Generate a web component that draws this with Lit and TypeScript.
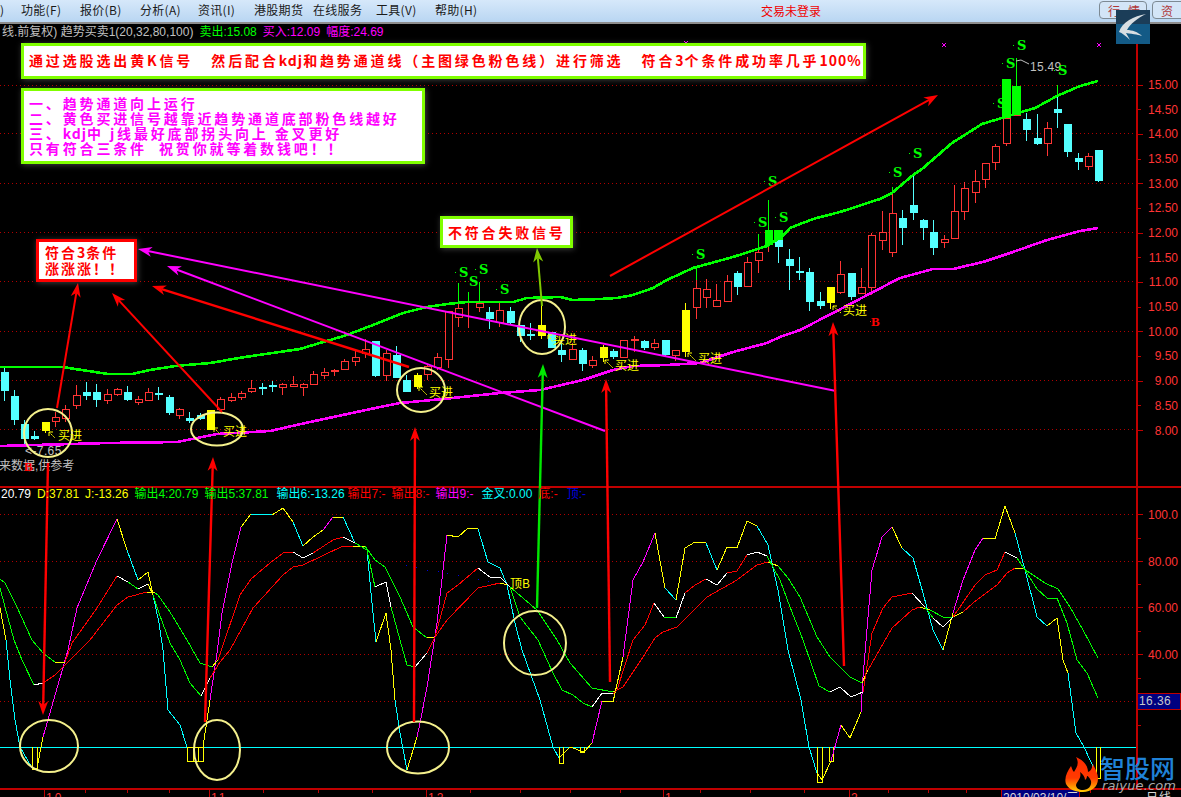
import { LitElement, html, css, svg } from "lit";
import { customElement } from "lit/decorators.js";

const COL: Record<string, string> = { c: "#00ffff", y: "#ffff00", m: "#ff00ff", g: "#00ff00", r: "#ff0000", w: "#ffffff" };

// price candles: type, high, body top, body bottom, low
const CANDLES: [string, number, number, number, number][] = [
  ["c",367,372,391,401],["c",390,396,420,425],["c",420,424,439,447],["c",431,436,439,440],["y",422,422,431,433],
  ["r",412,417,421,427],["r",405,409,418,422],["r",385,395,405,409],["c",382,392,396,400],["c",384,392,400,407],
  ["r",389,394,400,404],["r",388,389,394,396],["c",386,392,400,401],["r",396,399,402,405],["r",388,392,400,400],
  ["c",387,393,395,400],["c",395,397,413,415],["r",408,409,415,419],["c",412,418,421,423],["c",413,415,419,420],
  ["y",410,410,430,430],["r",397,399,409,410],["r",393,397,400,402],["r",391,393,397,400],["r",380,388,391,393],
  ["c",383,387,388,395],["c",381,385,387,392],["r",383,384,387,395],["r",376,384,386,387],["r",383,384,387,396],
  ["r",371,374,384,384],["r",368,372,375,379],["r",369,370,371,376],["r",359,361,369,369],["r",350,357,361,366],
  ["r",339,349,353,358],["c",341,341,376,377],["r",350,353,375,381],["c",346,355,378,378],["c",375,380,392,392],
  ["y",373,375,387,389],["r",365,366,374,380],["r",353,357,367,370],["r",311,311,359,368],["r",283,308,317,327],
  ["r",292,301,301,328],["r",282,303,307,312],["c",307,312,319,329],["r",302,310,322,327],["c",307,311,323,325],
  ["c",325,325,336,342],["c",323,334,336,340],["y",306,325,336,339],["c",332,332,348,348],["c",343,350,355,362],
  ["r",343,349,359,359],["c",348,350,364,371],["r",356,360,365,368],["y",345,347,358,362],["c",349,351,357,359],
  ["r",340,340,357,357],["r",336,339,340,352],["c",340,341,348,350],["r",339,343,347,350],["c",340,340,355,356],
  ["r",350,350,355,361],["y",303,310,352,357],["r",268,288,307,319],["r",279,289,297,308],["r",284,300,306,306],
  ["r",275,281,301,301],["c",271,273,287,295],["r",257,262,286,286],["r",234,252,260,273],["g",200,230,245,252],
  ["c",239,239,247,263],["c",249,259,266,290],["c",257,271,273,280],["c",268,272,302,311],["c",292,301,306,309],
  ["y",287,287,303,309],["r",261,274,292,294],["c",273,273,297,300],["r",268,287,293,293],["r",233,235,287,295],
  ["r",211,232,240,250],["r",187,213,252,257],["c",210,218,228,245],["c",173,205,213,220],["c",219,220,228,240],
  ["c",220,232,248,255],["r",235,239,242,248],["r",185,211,238,238],["r",182,188,211,220],["r",170,181,192,203],
  ["r",163,163,179,188],["r",144,146,162,170],["r",117,118,143,146],["r",90,90,115,115],["c",113,119,130,141],
  ["c",114,138,144,145],["r",122,128,143,156],["c",96,109,113,128],["c",124,124,152,157],["c",153,158,162,170],
  ["r",153,156,166,170],["c",150,150,181,182],
];
const cx = (i: number) => Math.round(3.5 + i * 10.33);

const GREEN_WICKS: [number, number, number][] = [[44,283,302],[45,292,301],[46,282,302],[67,268,280],[73,234,248],[86,187,193],[88,173,175],[98,58,90],[102,85,96]];
const GREEN_BODIES: [number, number, number][] = [[75,230,240],[97,79,118],[98,86,115]];

const UP = "0,367 63,367 75,369 95,372 108,374 132,374 150,370 175,366 210,363 245,357 300,349 320,343 347,335 373,325 403,313 427,307 447,304 467,302 487,302 513,302 527,298 560,297 573,300 600,299 617,298 633,295 653,288 667,280 693,268 733,257 767,246 783,236 790,228 813,219 840,212 880,199 892,193 913,175 922,169 952,143 982,124 1005,117 1035,108 1057,96 1080,86 1098,81";
const LOW = "0,446 107,443 177,442 217,434 270,431 310,422 380,407 400,403 443,399 500,393 540,390 583,380 613,370 633,366 667,365 700,363 733,352 767,343 780,337 800,330 833,313 873,292 900,278 933,269 953,269 983,262 1013,252 1047,240 1080,231 1098,228";

const J = "y 0,608 6,640 c 10,680 15,720 20,747 32,768 y 37,768 43,737 m 48,720 68,650 77,608 97,560 117,519 y 127,550 c 138,580 y 148,572 153,595 c 159,623 163,650 168,710 180,725 187,747 y 203,747 210,700 m 217,653 222,613 232,563 241,527 y 251,514 c 263,514 272,515 y 283,508 293,522 c 303,546 y 313,537 323,530 m 333,517 y 343,517 c 355,543 367,550 372,603 376,642 y 386,613 391,650 395,700 c 400,733 407,770 y 417,737 m 420,723 427,687 437,623 447,535 y 458,537 468,528 478,529 c 488,562 500,568 507,585 515,623 522,650 540,700 553,747 559,758 y 570,747 584,752 592,743 m 602,701 y 613,702 623,657 m 633,580 643,562 655,533 y 665,588 c 676,600 y 685,548 695,542 706,543 c 717,570 y 727,547 737,548 747,521 757,526 c 768,545 778,590 788,650 801,700 809,747 817,773 y 822,780 831,761 m 841,725 y 850,738 861,712 m 863,677 872,570 882,537 892,527 y 902,548 c 913,558 923,593 933,630 943,650 y 953,613 m 963,580 975,550 983,538 y 995,539 1005,506 1015,533 c 1025,570 1037,617 1047,626 y 1057,618 1063,660 1068,673 c 1076,733 1084,747 1096,773";
const P = "y 0,579 g 5,583 17,607 32,640 43,653 55,662 y 65,662 r 72,643 97,608 117,576 w 128,582 g 138,589 w 148,584 y 153,595 g 159,613 170,643 180,660 190,683 201,696 w 210,678 r 220,662 230,650 253,608 283,575 293,567 303,565 343,546 353,546 y 365,546 g 375,560 385,567 400,597 413,627 427,638 y 435,637 r 447,620 478,588 500,583 y 508,585 g 517,593 537,610 557,640 570,663 592,688 613,692 y 617,690 r 623,687 643,657 655,638 663,632 677,627 707,597 737,580 757,565 768,562 y 778,566 g 788,578 800,597 817,637 830,657 850,677 862,683 y 868,670 r 892,628 912,610 920,607 y 930,610 g 943,617 953,617 y 963,612 r 973,603 997,585 1007,573 1015,568 y 1024,569 g 1045,583 1058,589 1070,607 1083,630 1098,658";
const Q = "w 0,588 g 5,607 14,640 22,660 34,685 w 43,683 r 55,675 80,650 90,640 117,605 128,597 147,592 y 155,593 g 158,595 170,612 187,640 200,663 212,667 y 218,660 r 240,595 251,579 270,563 283,553 293,552 w 303,558 313,553 r 333,540 343,537 w 355,543 g 367,550 375,587 w 386,582 391,607 g 400,640 407,665 415,667 w 427,653 r 435,637 447,593 458,585 478,568 w 490,577 500,577 510,587 g 520,617 538,640 553,673 562,690 573,695 583,703 592,707 w 602,693 613,694 r 617,690 633,640 645,625 654,603 w 664,617 g 676,618 w 685,593 r 695,585 706,579 w 717,585 727,573 r 737,571 747,555 w 757,552 767,556 g 780,580 790,607 803,640 819,686 830,692 w 840,687 851,697 863,692 r 868,660 872,633 883,608 892,597 912,593 w 925,607 g 933,618 w 943,627 953,617 r 975,585 985,575 997,570 1005,552 w 1017,558 g 1025,570 1037,589 1047,598 1057,598 1067,623 1077,660 1087,673 1098,698";

const BARS = "M32 747V769H37V747M187 747V761H203V747M193 747V761M198 747V761M559 747V763H563V747M580 747V752H584V747M817 747V782H822V747M829 747V761H833V747M1096 747V778H1100V747";

function segments(s: string) {
  const out: { col: string; pts: string }[] = [];
  let col = "#fff";
  let cur: string[] = [];
  let last = "";
  for (const t of s.split(" ")) {
    if (t.includes(",")) {
      cur.push(t);
      last = t;
    } else {
      if (cur.length > 1) out.push({ col, pts: cur.join(" ") });
      col = COL[t];
      cur = last ? [last] : [];
    }
  }
  if (cur.length > 1) out.push({ col, pts: cur.join(" ") });
  return out;
}

// arrow: tail x,y -> tip x,y
function arrow(x1: number, y1: number, x2: number, y2: number, col: string, w = 2, head = 14, hw = 5) {
  const a = Math.atan2(y2 - y1, x2 - x1);
  const ux = Math.cos(a), uy = Math.sin(a);
  const bx = x2 - ux * head, by = y2 - uy * head;
  const nx = x2 - ux * (head * 0.72), ny = y2 - uy * (head * 0.72);
  const pts = [
    `${x2},${y2}`,
    `${bx - uy * hw},${by + ux * hw}`,
    `${nx},${ny}`,
    `${bx + uy * hw},${by - ux * hw}`,
  ].join(" ");
  return svg`<line x1=${x1} y1=${y1} x2=${nx} y2=${ny} stroke=${col} stroke-width=${w}></line><polygon points=${pts} fill=${col}></polygon>`;
}

const ARROWS: [number, number, number, number, string, number][] = [
  [836,391,138,249,"#ff00ff",2],
  [605,431,167,266,"#ff00ff",2],
  [409,367,152,286,"#ff0000",2.4],
  [57,408,78,283,"#ff0000",2],
  [222,412,112,293,"#ff0000",2],
  [205,722,213,457,"#ff0000",2.4],
  [48,463,43,715,"#ff0000",2.4],
  [414,722,415,427,"#ff0000",2.4],
  [537,608,543,364,"#00e800",2.4],
  [542,306,537,248,"#80c800",2],
  [610,682,606,379,"#ff0000",2.4],
  [844,666,833,322,"#ff0000",2.4],
  [610,276,938,95,"#ff0000",2],
];
const ELLIPSES: [number, number, number, number][] = [
  [48,433,24,24],[217,429,26,16.5],[421,390,24,22],[542,327,23,27],[535,643,31,32],[49,746,29,26],[217,750,23,30],[418,747.5,31,26],
];
const BUYS: [number, number, number, number, number][] = [
  [49,432,55,438,58],[214,428,220,434,223],[419,387,427,395,429],[548,335,553,342,553],[605,360,613,368,615],[688,353,696,361,698],[833,306,841,313,843],
];
const SS: [number, number][] = [
  [463,272],[473,281],[483,269],[504,289],[700,254],[762,222],[783,217],[772,181],[897,172],[917,153],[1001,103],[1010,63],[1062,70],[1021,45],
];
const MAIN_LABELS = ["15.00","14.50","14.00","13.50","13.00","12.50","12.00","11.50","11.00","10.50","10.00","9.50","9.00","8.50","8.00"];
const yPrice = (i: number) => 84.5 + i * 24.68;
const SUB_LABELS: [string, number][] = [["100.0",514],["80.00",561],["60.00",607],["40.00",654]];
const SUB_TICKS = [538,584,631,678,701,725];
const GRID = [85,133,183,232,281,331,380,429,514,561,607,654,701];
const TIME_TICKS = [85,127,169,263,318,372,470,520,570,620,700,750,804,888,928,966,1010,1050,1090];
const TIME_MAJOR: [number, string][] = [[44,"10"],[209,"11"],[426,"12"],[663,"1"],[849,"2"]];
const NAVY = ["406,565","416,567","427,570","438,571","447,573","458,575","468,576","478,579","488,581"];

const MENU = ["功能(F)", "报价(B)", "分析(A)", "资讯(I)", "港股期货", "在线服务", "工具(V)", "帮助(H)"];

const SUB_HEAD: [string, string, number][] = [
  ["20.79", "w", 0], ["D:37.81", "y", 0], ["J:-13.26", "y", 0], ["输出4:20.79", "g", 0], ["输出5:37.81", "g", 0], ["输出6:-13.26", "c", 2],
  ["输出7:-", "r", -3], ["输出8:-", "r", 0], ["输出9:-", "m", 0], ["金叉:0.00", "c", 2], ["底:-", "r", 0], ["顶:-", "b", 3],
];

@customElement("app-root")
export class AppRoot extends LitElement {
  static styles = css`
    :host {
      display: block;
      position: relative;
      width: 1181px;
      height: 797px;
      overflow: hidden;
      background: #000;
      font-family: "Liberation Sans", "Noto Sans CJK SC", sans-serif;
      font-size: 12px;
    }
    .toolbar {
      display: flex;
      align-items: flex-start;
      height: 22px;
      border-bottom: 2px solid #8d8d8d;
      background: linear-gradient(#d6e8fa, #b9d6f2);
      overflow: hidden;
    }
    .menu {
      flex: none;
      display: grid;
      grid-template-columns: 21px 59px 60px 58px 56px 59px 63px 59px 60px;
      width: 761px;
      line-height: 20px;
      color: #1a1a1a;
      font-family: "Noto Sans CJK SC", sans-serif;
      font-size: 12px;
      letter-spacing: 0.3px;
      white-space: nowrap;
    }
    .status {
      flex: none;
      width: 338px;
      color: #f00000;
      line-height: 21px;
      font-family: "Noto Sans CJK SC", sans-serif;
    }
    .btns { flex: none; display: flex; gap: 5px; padding-top: 1px; }
    .btn {
      width: 46px;
      height: 16px;
      border: 1px solid #7d8a94;
      border-radius: 4px;
      text-align: center;
      line-height: 17px;
      color: #b03838;
      letter-spacing: 8px;
      text-indent: 8px;
      white-space: nowrap;
      font-family: "Noto Sans CJK SC", sans-serif;
      background: #d3e5f7;
    }
    .stage { position: relative; height: 773px; }
    .chart { display: block; position: absolute; inset: 0; width: 1181px; height: 773px; }
    .line { fill: none; stroke-width: 1; shape-rendering: crispEdges; }
    .trend { fill: none; stroke-width: 2.6; shape-rendering: crispEdges; }
    .grid { stroke: #b00000; stroke-width: 1; stroke-dasharray: 1 3; shape-rendering: crispEdges; }
    .axis { stroke: #c00000; stroke-width: 2; shape-rendering: crispEdges; }
    .tick { stroke: #c00000; stroke-width: 1; shape-rendering: crispEdges; }
    .crisp { shape-rendering: crispEdges; }
    .ax { fill: #ff3434; font-size: 12px; }
    .buy { fill: #ffff00; font-size: 12px; font-family: "Noto Sans CJK SC", sans-serif; }
    .ss { fill: #00ff00; font: bold 13px "DejaVu Serif", serif; }
    .bb { fill: #ff0000; font: bold 13px "Liberation Serif", serif; }
    .grey { fill: #c0c0c0; font-size: 12px; font-family: "Liberation Sans", "Noto Sans CJK SC", sans-serif; }
    .tp { fill: #ffff00; font-size: 12px; font-family: "Noto Sans CJK SC", "Liberation Sans", sans-serif; }
    .time { fill: #ff3434; font-size: 12px; letter-spacing: 2px; }
    .datebox { fill: #000080; stroke: #c00000; }
    .date { fill: #d8d8d8; font-size: 12px; font-family: "Liberation Sans", "Noto Sans CJK SC", sans-serif; }
    .brand { fill: #1f82d8; font: 500 25px "Noto Sans CJK SC", sans-serif; }
    .site { fill: #a8a8a8; font: italic 13px "DejaVu Sans", sans-serif; }
    .head {
      position: absolute;
      left: 0;
      white-space: nowrap;
      line-height: 16px;
      display: flex;
      font-size: 12px;
    }
    .head span { white-space: pre; }
    .h1 { top: 0; color: #c0c0c0; left: 2px; gap: 6px; }
    .h2 { top: 462px; left: 1px; gap: 6px; }
    .w { color: #fff; } .y { color: #ff0; } .g { color: #0f0; } .c { color: #0ff; } .r { color: #f00; } .m { color: #f0f; } .b { color: #0000e0; }
    .note {
      position: absolute;
      box-sizing: border-box;
      background: #fff;
      border: 3px solid #80ff00;
      box-shadow: 1px 1px 6px rgba(255, 255, 255, 0.25);
      font: bold 14px "Noto Sans CJK SC", sans-serif;
      white-space: pre;
      color: #f00;
    }
    .lat { letter-spacing: 1px; }
    .n1 { left: 21px; top: 19px; width: 845px; height: 36px; padding: 0 0 0 5px; line-height: 29px; letter-spacing: 2.86px; }
    .n2 { left: 21px; top: 64px; width: 404px; height: 76px; padding: 5px 0 0 5px; line-height: 14.9px; color: #f0f; letter-spacing: 2.85px; }
    .n3 { left: 36px; top: 215px; width: 101px; height: 43px; border-color: #f00; border-width: 3.5px; padding: 2px 0 0 6px; line-height: 16px; letter-spacing: 2px; }
    .n4 { left: 440px; top: 192px; width: 133px; height: 32px; padding: 0 0 0 5px; line-height: 26px; letter-spacing: 2.8px; }
    .logo {
      position: absolute;
      left: 1116px;
      top: 10px;
      width: 34px;
      height: 34px;
    }
    .price16 {
      position: absolute;
      left: 1137px;
      top: 669px;
      width: 44px;
      height: 17px;
      box-sizing: border-box;
      background: #000080;
      border: 1px solid #c00000;
      color: #c8c8c8;
      line-height: 15px;
      padding-left: 1px;
      letter-spacing: 0.4px;
    }
  `;

  private chart() {
    const eps = [...segments(J), ...segments(P), ...segments(Q)];
    return svg`
      ${GRID.map((y) => svg`<line class="grid" x1="0" x2="1136" y1=${y + 0.5} y2=${y + 0.5}></line>`)}

      ${CANDLES.map((c, i) => {
        const x = cx(i);
        const [t, hi, top, bot, lo] = c;
        const col = t === "r" ? "#ff3434" : t === "c" ? "#54ffff" : t === "y" ? "#ffff00" : "#00ff00";
        const wickLow = t === "g" ? "#ff3434" : col;
        const hollow = t === "r";
        return svg`
          <line class="crisp" x1=${x + 0.5} x2=${x + 0.5} y1=${hi} y2=${top} stroke=${col}></line>
          <line class="crisp" x1=${x + 0.5} x2=${x + 0.5} y1=${bot} y2=${lo} stroke=${wickLow}></line>
          ${hollow
            ? svg`<rect class="crisp" x=${x - 3 + 0.5} y=${top + 0.5} width="7" height=${Math.max(1, bot - top)} fill="#000" stroke=${col}></rect>`
            : svg`<rect class="crisp" x=${x - 3} y=${top} width="8" height=${Math.max(2, bot - top)} fill=${col}></rect>`}
        `;
      })}
      ${GREEN_WICKS.map(([i, a, b]) => svg`<line class="crisp" x1=${cx(i) + 0.5} x2=${cx(i) + 0.5} y1=${a} y2=${b} stroke="#00ff00"></line>`)}
      ${GREEN_BODIES.map(([i, a, b]) => svg`<rect class="crisp" x=${cx(i) - 4} y=${a} width="9" height=${b - a} fill="#00ff00"></rect>`)}

      <polyline class="trend" points=${UP} stroke="#00ff00"></polyline>
      <polyline class="trend" points=${LOW} stroke="#ff00ff"></polyline>

      <!-- indicator pane -->
      <line x1="0" x2="1136" y1="747.5" y2="747.5" stroke="#00ffff" class="crisp"></line>
      <path d=${BARS} class="line" stroke="#ffff00"></path>
      ${NAVY.map((p) => {
        const [a, b] = p.split(",");
        return svg`<rect x=${a} y=${b} width="1" height="1" fill="#0000e0"></rect>`;
      })}
      ${eps.map((s) => svg`<polyline class="line" points=${s.pts} stroke=${s.col}></polyline>`)}

      <!-- axes -->
      <line class="axis" x1="0" x2="1181" y1="486.5" y2="486.5"></line>
      <line class="axis" x1="0" x2="1181" y1="788.5" y2="788.5"></line>
      <line class="axis" x1="1136.5" x2="1136.5" y1="24" y2="788"></line>
      ${MAIN_LABELS.map((l, i) => svg`
        <line class="tick" x1="1137" x2=${i % 2 ? 1141 : 1143} y1=${Math.round(yPrice(i)) + 0.5} y2=${Math.round(yPrice(i)) + 0.5}></line>
        <text class="ax" x="1178" y=${yPrice(i) + 4.5} text-anchor="end">${l}</text>`)}
      ${SUB_LABELS.map(([l, y]) => svg`
        <line class="tick" x1="1137" x2="1143" y1=${y + 0.5} y2=${y + 0.5}></line>
        <text class="ax" x="1178" y=${y + 4.5} text-anchor="end">${l}</text>`)}
      ${SUB_TICKS.map((y) => svg`<line class="tick" x1="1137" x2="1141" y1=${y + 0.5} y2=${y + 0.5}></line>`)}
      ${TIME_TICKS.map((x) => svg`<line class="tick" x1=${x + 0.5} x2=${x + 0.5} y1="789" y2="793"></line>`)}
      ${TIME_MAJOR.map(([x, l]) => svg`
        <line class="tick" x1=${x + 0.5} x2=${x + 0.5} y1="789" y2="797"></line>
        <text class="time" x=${x + 2} y="802">${l}</text>`)}
      <rect class="datebox crisp" x="1001.5" y="789.5" width="78" height="12"></rect>
      <text class="date" x="1003" y="802">2010/03/10/三</text>
      <text class="date" x="1146" y="802" letter-spacing="1">日线</text>

      <!-- high / low -->
      <polyline points="1016,61 1021,60 1029,64" fill="none" stroke="#c0c0c0"></polyline>
      <text class="grey" x="1030" y="71" letter-spacing="0.3">15.49</text>
      <text class="grey" x="25" y="455" letter-spacing="0.4">&lt;-7.65</text>
      <text class="grey" x="-13" y="470">未来数据,供参考</text>
      <text class="bb" x="24" y="471">B</text>
      <text class="bb" x="871" y="326">B</text>
      <rect x="870" y="321" width="1" height="1" fill="#ff0000"></rect>
      <text class="tp" x="510" y="588">顶B</text>

      ${SS.map(([x, y]) => svg`
        <rect x=${x - 8} y=${y} width="1" height="1" fill="#00ff00"></rect>
        <text class="ss" x=${x - 4} y=${y + 5}>S</text>`)}
      ${[[686, 43], [944, 45], [1099, 45]].map(([x, y]) => svg`
        <path d="M${x - 2} ${y - 2}L${x + 2} ${y + 2}M${x + 2} ${y - 2}L${x - 2} ${y + 2}" stroke="#ff00ff" class="crisp"></path>`)}

      <!-- annotations -->
      ${ELLIPSES.map(([x, y, rx, ry]) => svg`<ellipse cx=${x} cy=${y} rx=${rx} ry=${ry} fill="none" stroke="#f4f08c" stroke-width="2"></ellipse>`)}
      ${BUYS.map(([x1, y1, x2, y2, tx]) => svg`
        <line x1=${x1} y1=${y1} x2=${x2} y2=${y2} stroke="#ffff00" stroke-dasharray="2 1"></line>
        <path d="M${x1} ${y1}h4M${x1} ${y1}v4" stroke="#ffff00" fill="none"></path>
        <text class="buy" x=${tx} y=${y2 + 2}>买进</text>`)}
      ${ARROWS.map((a) => arrow(a[0], a[1], a[2], a[3], a[4], a[5]))}

      <!-- watermark -->
      <defs>
        <linearGradient id="fl" x1="0" y1="0" x2="0" y2="1">
          <stop offset="0" stop-color="#ff2a00"></stop>
          <stop offset="0.6" stop-color="#ff3a00"></stop>
          <stop offset="1" stop-color="#ffd000"></stop>
        </linearGradient>
      </defs>
      <path d="M1076 757C1080 764 1076 768 1074 772C1072 770 1072 768 1071 766C1067 772 1064 778 1066 784C1069 790 1076 792 1083 792C1091 792 1098 787 1098 779C1098 773 1095 769 1093 764C1092 768 1091 771 1088 772C1088 765 1083 760 1076 757Z" fill="url(#fl)"></path>
      <path d="M1080 772C1082 778 1077 781 1076 785C1076 788 1079 790 1083 790C1088 790 1092 786 1091 781C1090 778 1088 776 1087 776C1087 778 1086 779 1085 780C1085 777 1083 774 1080 772Z" fill="#000"></path>
      <text class="brand" x="1100" y="778">智股网</text>
      <text class="site" x="1102" y="790" textLength="74">raiyue.com</text>
    `;
  }

  render() {
    return html`
      <div class="toolbar">
        <div class="menu">
          <span>)</span>
          ${MENU.map((m) => html`<span>${m}</span>`)}
        </div>
        <div class="status">交易未登录</div>
        <div class="btns">
          <div class="btn">行情</div>
          <div class="btn">资讯</div>
        </div>
      </div>
      <div class="stage">
        <svg class="chart" viewBox="0 24 1181 773" aria-hidden="true">${this.chart()}</svg>
        <div class="head h1">
          <span>线.前复权) 趋势买卖1(20,32,80,100)</span>
          <span class="g">卖出:15.08</span>
          <span class="m">买入:12.09</span>
          <span class="m">幅度:24.69</span>
        </div>
        <div class="head h2">
          ${SUB_HEAD.map(([t, c, m]) => html`<span class=${c} style="margin-left:${m}px">${t}</span>`)}
        </div>
        <div class="note n1">通过选股选出黄K信号   然后配合<span class="lat">kdj</span>和趋势通道线（主图绿色粉色线）进行筛选   符合<span class="lat">3</span>个条件成功率几乎<span class="lat">100%</span></div>
        <div class="note n2">一、趋势通道向上运行
二、黄色买进信号越靠近趋势通道底部粉色线越好
三、<span class="lat">kdj</span>中 j线最好底部拐头向上 金叉更好
只有符合三条件  祝贺你就等着数钱吧！！</div>
        <div class="note n3">符合<span class="lat">3</span>条件
涨涨涨！！</div>
        <div class="note n4">不符合失败信号</div>
        <div class="price16">16.36</div>
      </div>
      <svg class="logo" viewBox="1116 10 34 34" aria-hidden="true">
        <rect x="1116" y="10" width="34" height="14" fill="#1b3d58"></rect>
        <rect x="1116" y="24" width="34" height="20" fill="#135a86"></rect>
        <path d="M1146 14C1134 16 1122 22 1119 32C1122 33 1126 36 1130 40L1126 33C1134 34 1140 35 1142 36C1138 32 1132 30 1127 30C1130 24 1138 18 1146 14Z" fill="#d8dee2"></path>
      </svg>
    `;
  }
}
